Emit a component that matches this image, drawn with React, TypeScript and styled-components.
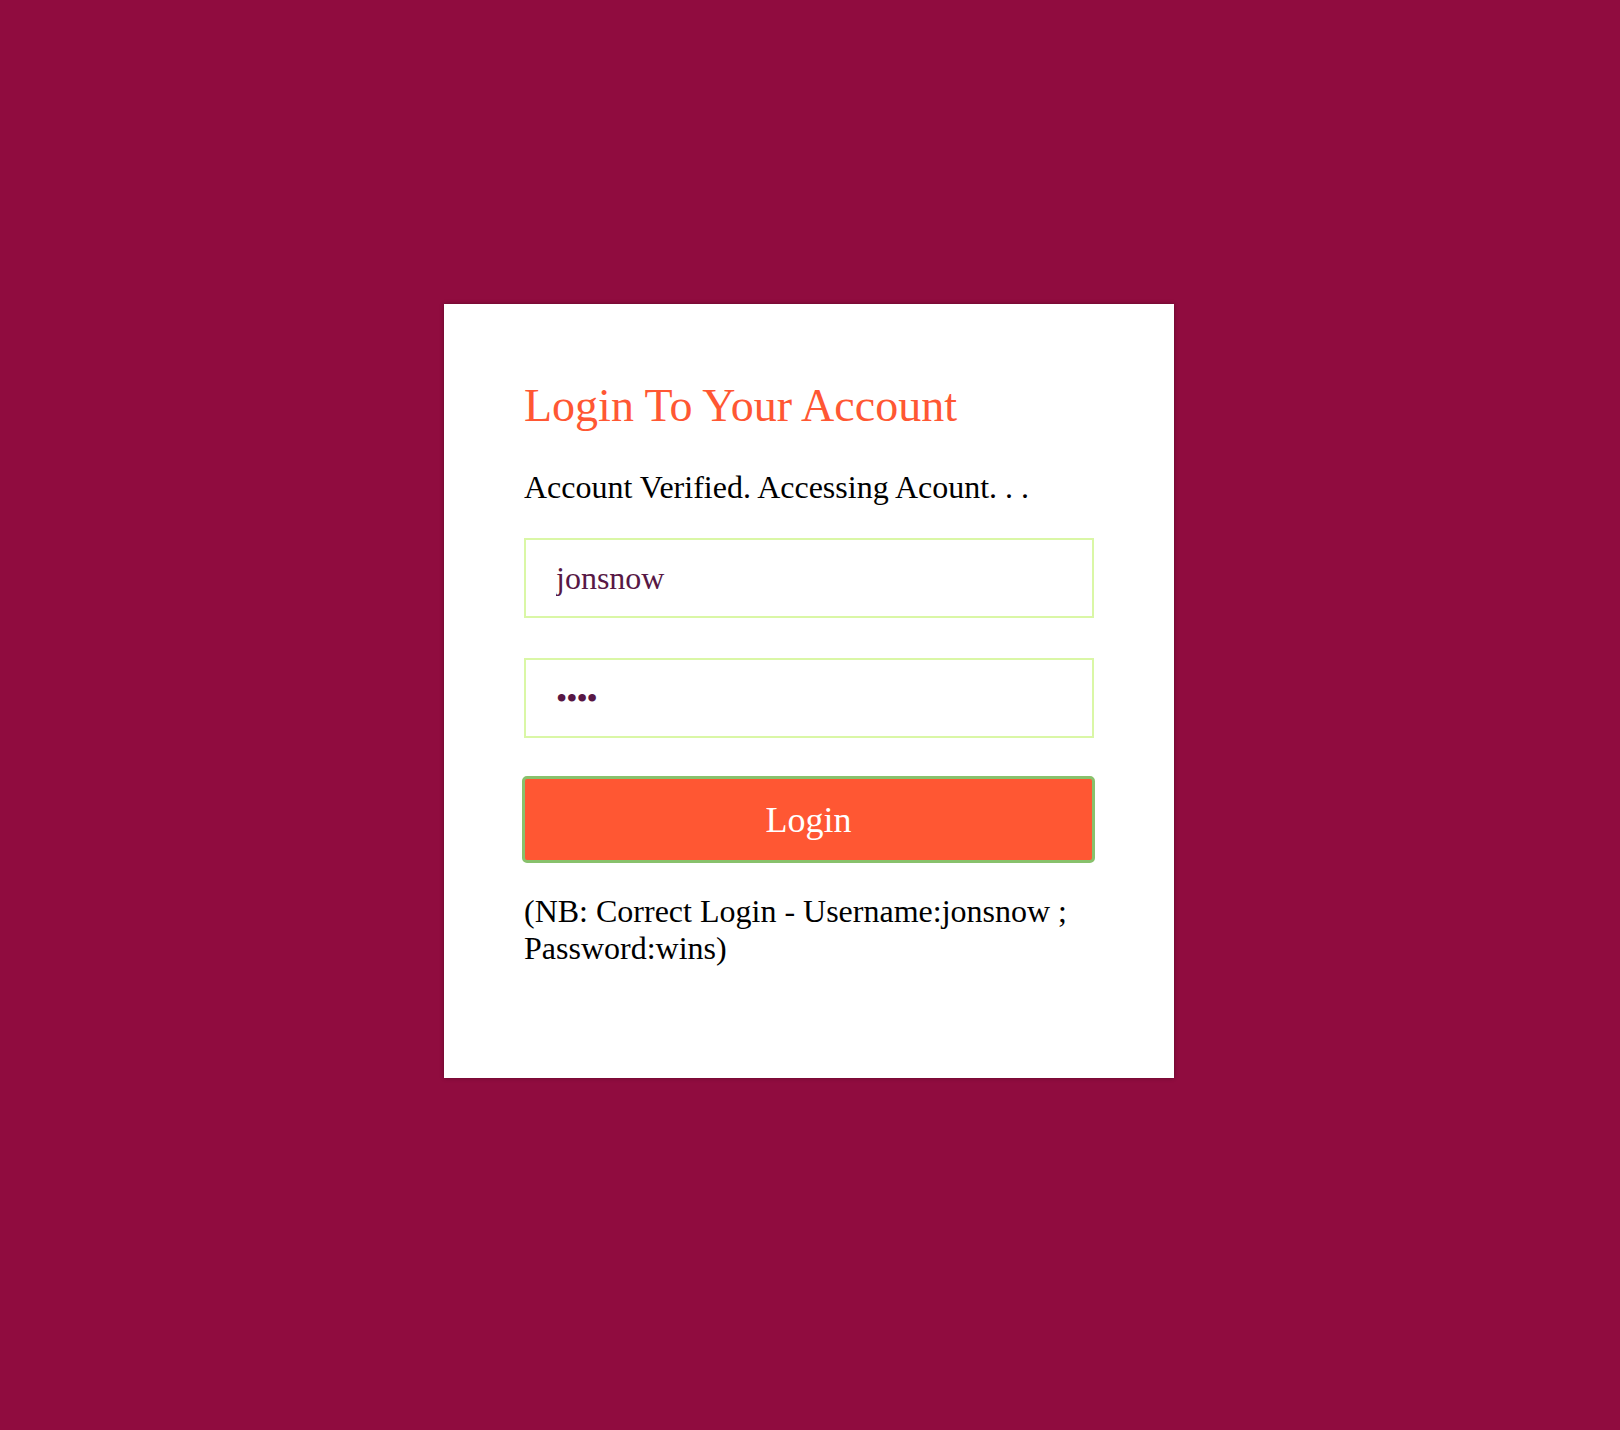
import React from "react";
import styled, { createGlobalStyle } from "styled-components";

const GlobalStyle = createGlobalStyle`
  html, body {
    margin: 0;
    padding: 0;
    background: #900c3f;
  }
  body {
    min-height: 1430px;
    font-family: "Liberation Serif", "Times New Roman", serif;
  }
`;

const Page = styled.div`
  display: flex;
  justify-content: center;
  padding: 304px 2px 0 0;
`;

const Card = styled.div`
  box-sizing: border-box;
  width: 730px;
  height: 774px;
  background: #ffffff;
  padding: 76px 80px 0;
  box-shadow: 0 0 4px rgba(0, 0, 0, 0.35);
  display: flex;
  flex-direction: column;
`;

const Title = styled.h1`
  margin: 0;
  font-size: 46px;
  line-height: 52px;
  font-weight: normal;
  color: #ff5733;
`;

const Status = styled.p`
  margin: 37px 0 0;
  font-size: 32px;
  line-height: 36px;
  color: #000;
`;

const Field = styled.input<{ $gap: number; $masked?: boolean }>`
  box-sizing: border-box;
  width: 100%;
  height: 80px;
  margin: ${(p) => p.$gap}px 0 0;
  padding: 0 30px;
  border: 2px solid #daf7a6;
  border-radius: 0;
  outline: none;
  background: #fff;
  font-family: "Liberation Serif", "Times New Roman", serif;
  font-size: 32px;
  letter-spacing: ${(p) => (p.$masked ? "-1px" : "normal")};
  color: #581845;
`;

const Button = styled.button`
  box-sizing: border-box;
  width: calc(100% + 3px);
  height: 87px;
  margin: 38px 0 0 -2px;
  border: 3px solid #88c16c;
  border-radius: 5px;
  background: #ff5733;
  color: #ffffff;
  font-family: "Liberation Serif", "Times New Roman", serif;
  font-size: 36px;
  cursor: pointer;
`;

const Note = styled.p`
  margin: 30px 0 0;
  font-size: 32px;
  line-height: 36.5px;
  color: #000;
`;

export default function App() {
  return (
    <>
      <GlobalStyle />
      <Page>
        <Card>
          <Title>Login To Your Account</Title>
          <Status>Account Verified. Accessing Acount. . .</Status>
          <Field $gap={33} type="text" defaultValue="jonsnow" />
          <Field $gap={40} $masked type="password" defaultValue="wins" />
          <Button type="button">Login</Button>
          <Note>(NB: Correct Login - Username:jonsnow ; Password:wins)</Note>
        </Card>
      </Page>
    </>
  );
}
